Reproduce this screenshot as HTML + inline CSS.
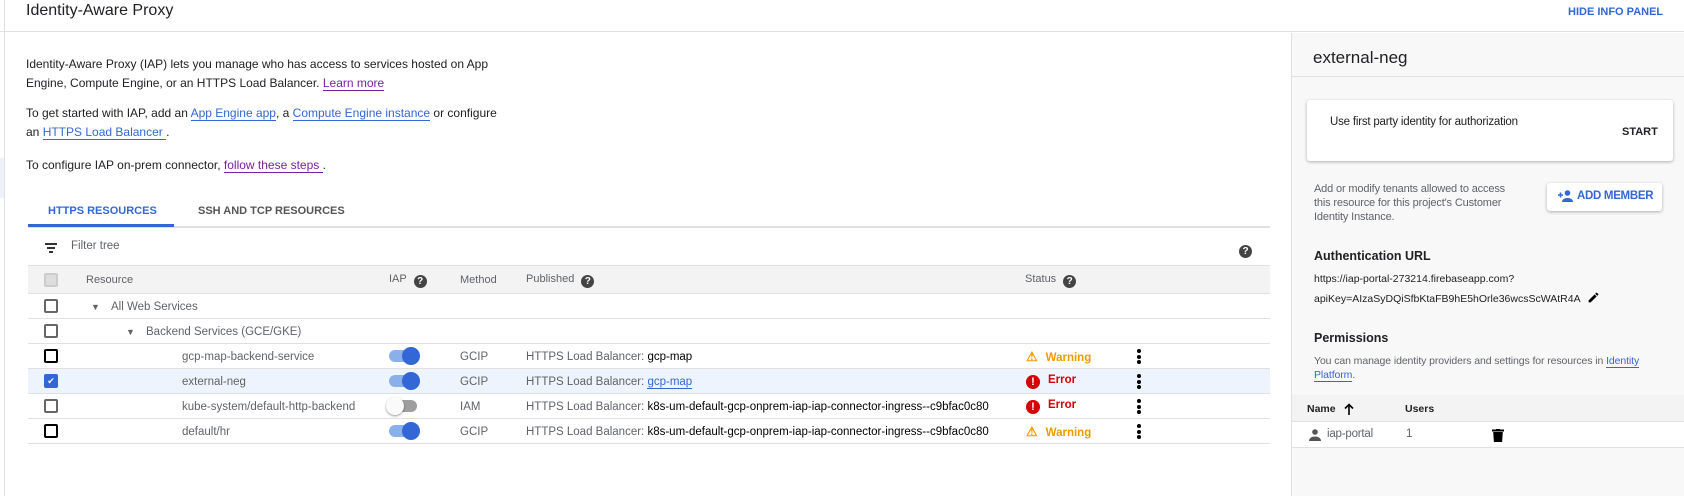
<!DOCTYPE html>
<html><head><meta charset="utf-8"><style>
*{box-sizing:border-box;margin:0;padding:0}
body{width:1684px;height:496px;overflow:hidden;background:#fff;font-family:"Liberation Sans",Roboto,sans-serif;color:#202124;position:relative;font-size:12px}
.a{position:absolute;white-space:nowrap}
.lk{color:#3367d6;border-bottom:1px solid #3367d6}
.vl{color:#7b1fa2;border-bottom:1px solid #7b1fa2}
.row{position:absolute;left:28px;width:1242px;height:25px;border-bottom:1px solid #e0e0e0}
.cb{position:absolute;left:16px;top:5px;width:14px;height:14px;border:2px solid #666;border-radius:2px}
.tg{position:absolute;left:361px;top:6px;width:28px;height:12px;border-radius:6px;background:#8ab0ec}
.tg i{position:absolute;right:-3px;top:-3px;width:18px;height:18px;border-radius:50%;background:#3367d6}
.tg.off{background:#9e9e9e}.tg.off i{left:-3px;right:auto;background:#fafafa;box-shadow:0 1px 2px rgba(0,0,0,.4)}
.t{position:absolute;top:5px;font-size:11.5px}
.row .g{top:7px}
.g{color:#5f6368}
.q{display:inline-block;width:13px;height:13px;border-radius:50%;background:#444;color:#fff;font-size:10px;font-weight:bold;text-align:center;line-height:13px;vertical-align:-2px;margin-left:7px;letter-spacing:0}
.dots{position:absolute;left:1109px;top:5px;width:4px}
.dots b{display:block;width:4px;height:4px;border-radius:50%;background:#000;margin-bottom:1.5px}
.err{display:inline-block;width:14px;height:14px;border-radius:50%;background:#d50000;color:#fff;text-align:center;font-size:11px;line-height:14px;margin-right:8px;vertical-align:-2px}
.wr{display:inline-block;margin-right:8px;font-size:13px}
</style></head><body>
<div class="a" style="left:0;top:0;width:1684px;height:32px;border-bottom:1px solid #e0e0e0"></div>
<div class="a" style="left:4px;top:0;width:1px;height:496px;background:#e0e0e0"></div>
<div class="a" style="left:0;top:158px;width:4px;height:40px;background:#eef2f8"></div>
<div class="a" style="left:26px;top:2px;font-size:16px">Identity-Aware Proxy</div>
<div class="a" style="left:1568px;top:6px;font-size:11px;font-weight:bold;color:#3367d6">HIDE INFO PANEL</div>

<div class="a" style="left:26px;top:55px;line-height:19px;font-size:12px">Identity-Aware Proxy (IAP) lets you manage who has access to services hosted on App<br>Engine, Compute Engine, or an HTTPS Load Balancer. <span class="vl">Learn more</span></div>
<div class="a" style="left:26px;top:104px;line-height:19px;font-size:12px">To get started with IAP, add an <span class="lk">App Engine app</span>, a <span class="lk">Compute Engine instance</span> or configure<br>an <span class="lk">HTTPS Load Balancer </span>.</div>
<div class="a" style="left:26px;top:158px;font-size:12px">To configure IAP on-prem connector, <span class="vl">follow these steps </span>.</div>

<div class="a" style="left:28px;top:226px;width:1242px;height:2px;background:#e0e0e0"></div>
<div class="a" style="left:28px;top:224px;width:146px;height:3px;background:#3367d6"></div>
<div class="a" style="left:48px;top:205px;font-size:11px;font-weight:bold;color:#3367d6">HTTPS RESOURCES</div>
<div class="a" style="left:198px;top:205px;font-size:11px;font-weight:bold;color:#555">SSH AND TCP RESOURCES</div>

<div class="a" style="left:45px;top:243px;width:12px;height:2px;background:#333"></div>
<div class="a" style="left:47px;top:247px;width:8px;height:2px;background:#333"></div>
<div class="a" style="left:49px;top:251px;width:4px;height:2px;background:#333"></div>
<div class="a g" style="left:71px;top:240px;font-size:11.5px">Filter tree</div>
<div class="a" style="left:1239px;top:241px"><span class="q" style="margin:0">?</span></div>

<div class="row" style="top:265px;height:29px;background:#f3f3f3;border-top:1px solid #e0e0e0">
<div class="cb" style="border-color:#ccc;background:#ddd;top:7px"></div>
<div class="t g" style="left:58px;top:8px;font-size:11px">Resource</div>
<div class="t g" style="left:361px;top:7px;font-size:11px">IAP<span class="q">?</span></div>
<div class="t g" style="left:432px;top:8px;font-size:11px">Method</div>
<div class="t g" style="left:498px;top:7px;font-size:11px">Published<span class="q">?</span></div>
<div class="t g" style="left:997px;top:7px;font-size:11px">Status<span class="q">?</span></div>
</div>
<div class="row" style="top:294px"><div class="cb"></div><div class="t g" style="left:63px;font-size:9px;top:8px">▼</div><div class="t g" style="left:83px">All Web Services</div></div>
<div class="row" style="top:319px"><div class="cb"></div><div class="t g" style="left:98px;font-size:9px;top:8px">▼</div><div class="t g" style="left:118px">Backend Services (GCE/GKE)</div></div>
<div class="row" style="top:344px"><div class="cb" style="border-color:#000"></div><div class="t g" style="left:154px">gcp-map-backend-service</div><div class="tg"><i></i></div><div class="t g" style="left:432px">GCIP</div><div class="t g" style="left:498px">HTTPS Load Balancer: <span style="color:#000">gcp-map</span></div><div class="t" style="left:998px;color:#f29900;font-weight:bold"><span class="wr">⚠</span>Warning</div><div class="dots"><b></b><b></b><b></b></div></div>
<div class="row" style="top:369px;background:#eef4fd"><div class="cb" style="background:#3367d6;border-color:#3367d6;color:#fff;font-size:9px;line-height:10px;text-align:center">✔</div><div class="t g" style="left:154px">external-neg</div><div class="tg"><i></i></div><div class="t g" style="left:432px">GCIP</div><div class="t g" style="left:498px">HTTPS Load Balancer: <span class="lk">gcp-map</span></div><div class="t" style="left:998px;color:#d50000;font-weight:bold"><span class="err">!</span>Error</div><div class="dots"><b></b><b></b><b></b></div></div>
<div class="row" style="top:394px"><div class="cb"></div><div class="t g" style="left:154px">kube-system/default-http-backend</div><div class="tg off"><i></i></div><div class="t g" style="left:432px">IAM</div><div class="t g" style="left:498px">HTTPS Load Balancer: <span style="color:#000">k8s-um-default-gcp-onprem-iap-iap-connector-ingress--c9bfac0c80</span></div><div class="t" style="left:998px;color:#d50000;font-weight:bold"><span class="err">!</span>Error</div><div class="dots"><b></b><b></b><b></b></div></div>
<div class="row" style="top:419px"><div class="cb" style="border-color:#000"></div><div class="t g" style="left:154px">default/hr</div><div class="tg"><i></i></div><div class="t g" style="left:432px">GCIP</div><div class="t g" style="left:498px">HTTPS Load Balancer: <span style="color:#000">k8s-um-default-gcp-onprem-iap-iap-connector-ingress--c9bfac0c80</span></div><div class="t" style="left:998px;color:#f29900;font-weight:bold"><span class="wr">⚠</span>Warning</div><div class="dots"><b></b><b></b><b></b></div></div>

<!-- right panel -->
<div class="a" style="left:1291px;top:33px;width:393px;height:463px;background:#f8f8f8;border-left:1px solid #e0e0e0"></div>
<div class="a" style="left:1292px;top:76px;width:392px;height:1px;background:#e0e0e0"></div>
<div class="a" style="left:1313px;top:48px;font-size:17px">external-neg</div>
<div class="a" style="left:1307px;top:100px;width:366px;height:61px;background:#fff;border-radius:3px;box-shadow:0 1px 3px rgba(0,0,0,.3)"></div>
<div class="a" style="left:1330px;top:116px;font-size:11.5px;letter-spacing:-0.2px">Use first party identity for authorization</div>
<div class="a" style="left:1622px;top:126px;font-size:11px;font-weight:bold">START</div>
<div class="a g" style="left:1314px;top:182px;font-size:11px;line-height:14px;letter-spacing:-0.15px">Add or modify tenants allowed to access<br>this resource for this project's Customer<br>Identity Instance.</div>
<div class="a" style="left:1547px;top:183px;width:115px;height:28px;background:#fff;border-radius:3px;box-shadow:0 1px 3px rgba(0,0,0,.3)"></div>
<svg class="a" style="left:1558px;top:190px" width="15" height="12" viewBox="0 0 15 12"><path d="M0 5h5M2.5 2.5v5" stroke="#3367d6" stroke-width="1.6"/><circle cx="9.5" cy="3" r="2.8" fill="#3367d6"/><path d="M4 12c0-3 3-4 5.5-4s5.5 1 5.5 4z" fill="#3367d6"/></svg>
<div class="a" style="left:1577px;top:190px;font-size:11.5px;font-weight:bold;color:#3367d6;letter-spacing:-0.3px">ADD MEMBER</div>
<div class="a" style="left:1314px;top:249px;font-size:12.5px;font-weight:bold">Authentication URL</div>
<div class="a" style="left:1314px;top:269px;font-size:10.5px;line-height:20px">https://iap-portal-273214.firebaseapp.com?<br>apiKey=AIzaSyDQiSfbKtaFB9hE5hOrle36wcsScWAtR4A</div>
<svg class="a" style="left:1587px;top:291px" width="13" height="13" viewBox="0 0 24 24"><path d="M3 17.25V21h3.75L17.81 9.94l-3.75-3.75L3 17.25zM20.71 7.04a1 1 0 000-1.41l-2.34-2.34a1 1 0 00-1.41 0l-1.830 1.83 3.75 3.75 1.83-1.83z" fill="#000"/></svg>
<div class="a" style="left:1314px;top:331px;font-size:12.5px;font-weight:bold">Permissions</div>
<div class="a g" style="left:1314px;top:354px;font-size:10.5px;line-height:14px;letter-spacing:-0.1px">You can manage identity providers and settings for resources in <span class="lk">Identity</span><br><span class="lk">Platform</span>.</div>
<div class="a" style="left:1292px;top:395px;width:392px;height:27px;background:#f3f3f3;border-bottom:1px solid #e0e0e0"></div>
<div class="a" style="left:1307px;top:403px;font-size:10.5px;font-weight:bold">Name</div>
<svg class="a" style="left:1344px;top:403px" width="10" height="12" viewBox="0 0 10 12"><path d="M5 12V2M1 5.5L5 1.5 9 5.5" stroke="#000" stroke-width="1.6" fill="none"/></svg>
<div class="a" style="left:1405px;top:403px;font-size:10.5px;font-weight:bold">Users</div>
<div class="a" style="left:1292px;top:422px;width:392px;height:26px;background:#fff;border-bottom:1px solid #e0e0e0"></div>
<svg class="a" style="left:1309px;top:429px" width="12" height="12" viewBox="0 0 12 12"><circle cx="6" cy="3" r="2.8" fill="#555"/><path d="M0 12c0-3 3-4.5 6-4.5s6 1.5 6 4.5z" fill="#555"/></svg>
<div class="a g" style="left:1327px;top:428px;font-size:11.5px;letter-spacing:-0.2px">iap-portal</div>
<div class="a g" style="left:1406px;top:428px;font-size:11.5px">1</div>
<svg class="a" style="left:1492px;top:429px" width="12" height="13" viewBox="0 0 12 13"><path d="M0 1.5h12M4 0h4" stroke="#000" stroke-width="2"/><path d="M1.2 3h9.6l-.7 10H1.9z" fill="#000"/></svg>
</body></html>
